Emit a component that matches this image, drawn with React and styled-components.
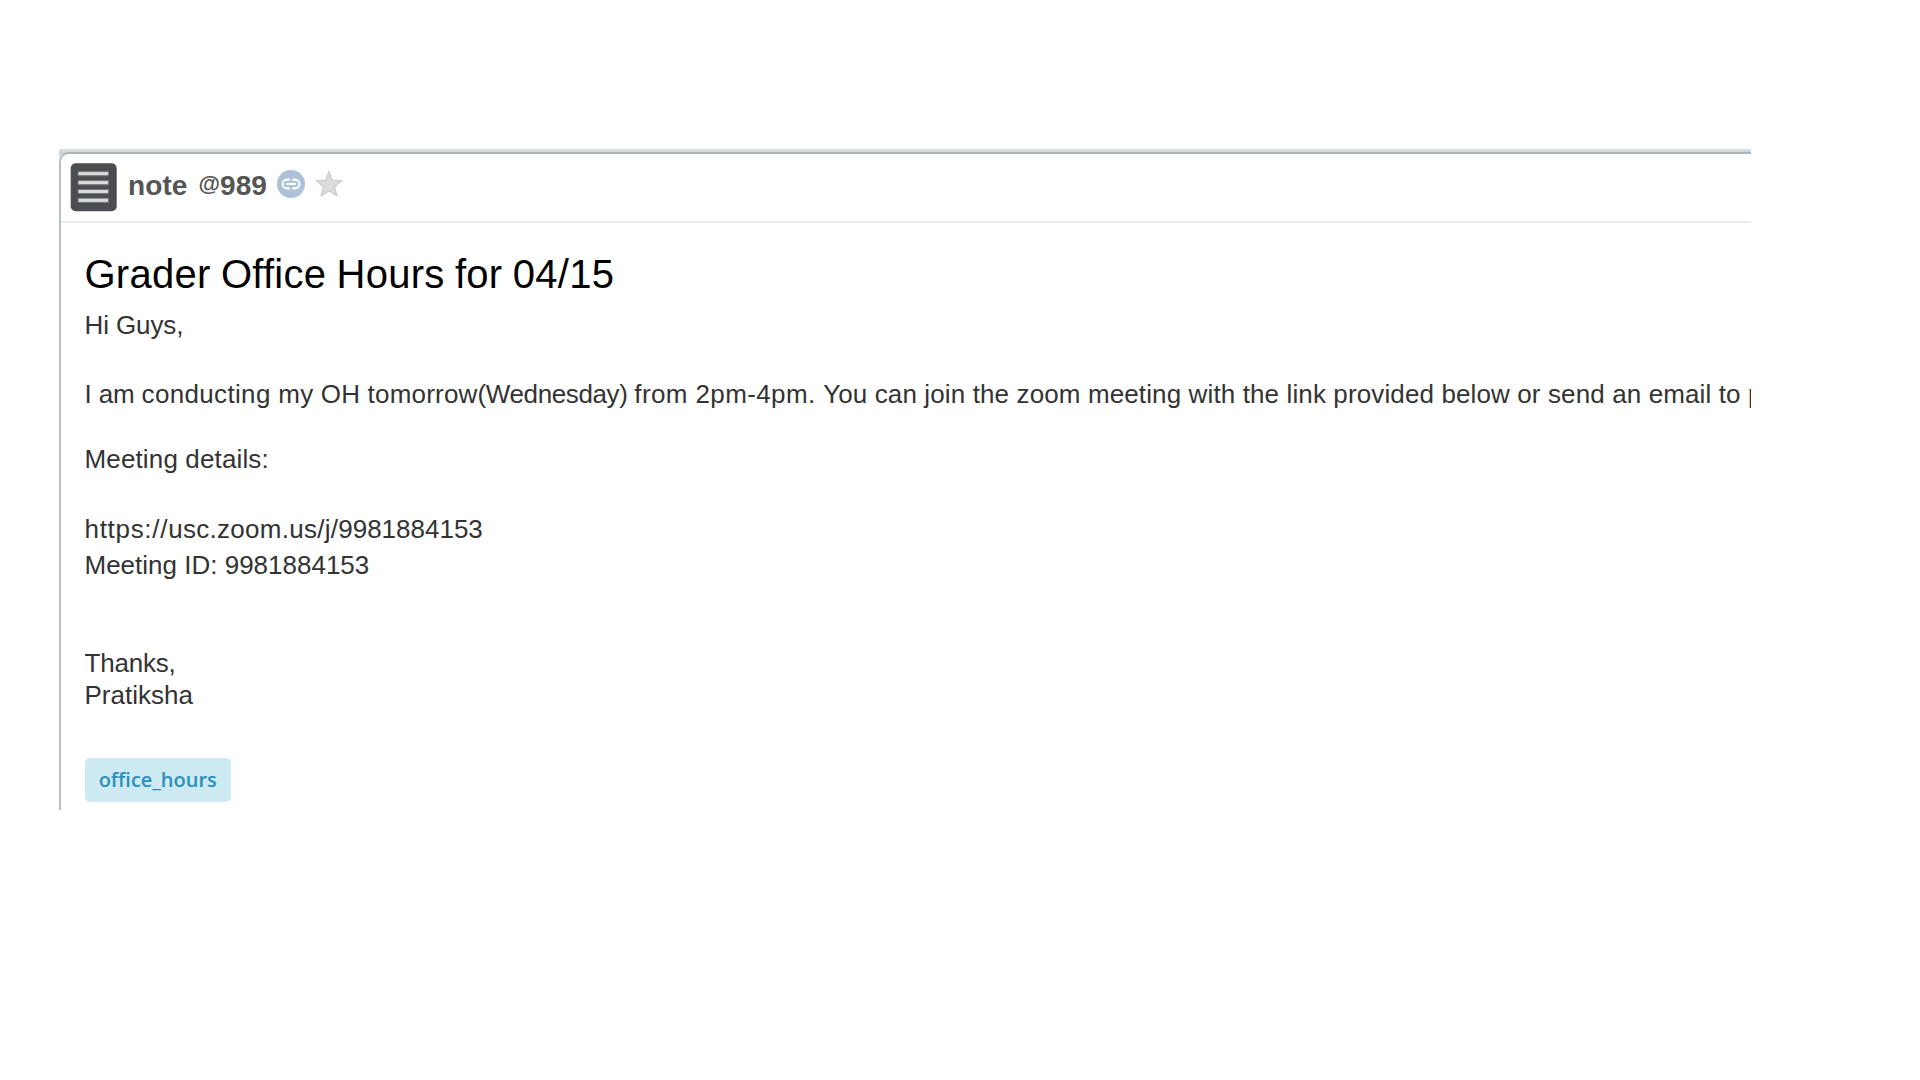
import React from "react";
import styled, { createGlobalStyle } from "styled-components";

// each line is a list of runs, with its own tracking
const lines = [
  { gap: 12, runs: [{ text: "Hi Guys,", tracking: -0.1 }] },
  {
    gap: 39,
    runs: [
      { text: "I am ", tracking: -0.15 },
      { text: "conducting ", tracking: 0.34 },
      { text: "my OH tomorrow", tracking: 0.2 },
      { text: "(Wednesday) ", tracking: -0.38 },
      { text: "from 2pm-4pm. ", tracking: 0.38 },
      {
        text: "You can join the zoom meeting with the link provided below or send an email to p",
        tracking: 0.12,
      },
    ],
  },
  { gap: 35, runs: [{ text: "Meeting details:", tracking: 0.14 }] },
  {
    gap: 40,
    runs: [
      { text: "https://", tracking: 0.7 },
      { text: "usc.zoom.us/j/", tracking: 0.28 },
      { text: "9981884153" },
    ],
  },
  { gap: 6, runs: [{ text: "Meeting ID: 9981884153" }] },
  { gap: 68, runs: [{ text: "Thanks,", tracking: -0.2 }] },
  { gap: 2, runs: [{ text: "Pratiksha" }] },
];

const NoteIcon = () => (
  <svg width="47" height="49" viewBox="0 0 47 49">
    <rect x="0.7" y="0.3" width="46" height="48" rx="5" fill="#4b4d50" />
    {[10.6, 19.6, 28.5, 37.3].map((y) => (
      <g key={y}>
        <rect x="7.6" y={y - 2.6} width="31.4" height="5.2" rx="1" fill="#777a7c" />
        <rect x="8.6" y={y - 1.5} width="29.4" height="3" fill="#d8dcdc" />
      </g>
    ))}
  </svg>
);

const LinkIcon = () => (
  <svg width="28" height="28" viewBox="0 0 28 28" fill="none">
    <circle cx="14" cy="14" r="14" fill="#adc2d8" />
    <g stroke="#fff" strokeWidth="2.1">
      <path d="M12.8 9.6H10a4.4 4.4 0 0 0 0 8.8h2.8" />
      <path d="M15.2 9.6H18a4.4 4.4 0 0 1 0 8.8h-2.8" />
      <path d="M9.3 14h9.4" />
    </g>
  </svg>
);

const StarIcon = () => (
  <svg width="28" height="28" viewBox="0 0 28 28">
    <path
      d="M14 1.5L17.3 10.3L26.7 10.7L19.4 16.6L21.9 25.8L14 20.6L6.1 25.8L8.6 16.6L1.3 10.7L10.7 10.3Z"
      fill="#dcdcdc"
      stroke="#cfcfcf"
      strokeWidth="1.4"
      strokeLinejoin="round"
    />
  </svg>
);

const App = () => {
  return (
    <>
      <GlobalStyle />
      <Frame>
        <NotePanel>
          <NoteHeader>
            <NoteIcon />
            <NoteLabel>
              note <AtSign>@</AtSign>989
            </NoteLabel>
            <HeaderActions>
              <LinkIcon />
              <StarIcon />
            </HeaderActions>
          </NoteHeader>
          <NoteBody>
            <NoteTitle>Grader Office Hours for 04/15</NoteTitle>
            {lines.map((line) => (
              <Line key={line.runs[0].text} $gap={line.gap}>
                {line.runs.map((run) => (
                  <Run key={run.text} $tracking={run.tracking}>
                    {run.text}
                  </Run>
                ))}
              </Line>
            ))}
            <Tag>office_hours</Tag>
          </NoteBody>
        </NotePanel>
      </Frame>
    </>
  );
};

const GlobalStyle = createGlobalStyle`
  body {
    margin: 0;
    background: #fff;
    font-family: "Liberation Sans", Arial, sans-serif;
  }

  * {
    box-sizing: border-box;
  }
`;

const Frame = styled.div`
  width: 1692px;
  height: 661px;
  margin: 149px 0 0 59px;
  padding-top: 3px;
  overflow: hidden;
  background: linear-gradient(#dce3e8, #c9d0d5 4px, #fff 12px);
`;

const NotePanel = styled.article`
  height: 658px;
  border-top: 2px solid #acb5bc;
  border-left: 2px solid #b8bfc4;
  border-top-left-radius: 10px;
  background: #fff;
`;

const NoteHeader = styled.header`
  display: flex;
  align-items: flex-start;
  height: 69px;
  padding: 9px 0 0 9px;
  border-bottom: 2px solid #ebeced;
`;

const NoteLabel = styled.span`
  margin: 7px 0 0 11px;
  width: 139px;
  line-height: 32px;
  font-size: 28px;
  font-weight: 700;
  letter-spacing: 0.1px;
  word-spacing: 3px;
  white-space: nowrap;
  color: #555;
`;

const AtSign = styled.span`
  font-size: 22px;
  line-height: 1;
  vertical-align: 4px;
`;

const HeaderActions = styled.div`
  display: flex;
  gap: 10px;
  margin: 6.5px 0 0 10px;
`;

const NoteBody = styled.div`
  padding: 27px 0 0 23.5px;
`;

const NoteTitle = styled.h1`
  margin: 0;
  line-height: 48px;
  font-size: 40px;
  font-weight: 400;
  letter-spacing: 0.26px;
  word-spacing: -1px;
  color: #000;
`;

const Line = styled.p`
  margin: ${(props) => props.$gap}px 0 0;
  line-height: 30px;
  font-size: 26px;
  white-space: pre;
  color: #333;
`;

const Run = styled.span`
  letter-spacing: ${(props) => props.$tracking || 0}px;
`;

const Tag = styled.span`
  display: inline-block;
  margin-top: 48px;
  width: 146.5px;
  height: 44px;
  border-radius: 5px;
  background: #cde9f1;
  font-family: "Open Sans", sans-serif;
  font-size: 20px;
  font-weight: 600;
  line-height: 43px;
  text-align: center;
  color: #2b8fbd;
`;

export default App;
